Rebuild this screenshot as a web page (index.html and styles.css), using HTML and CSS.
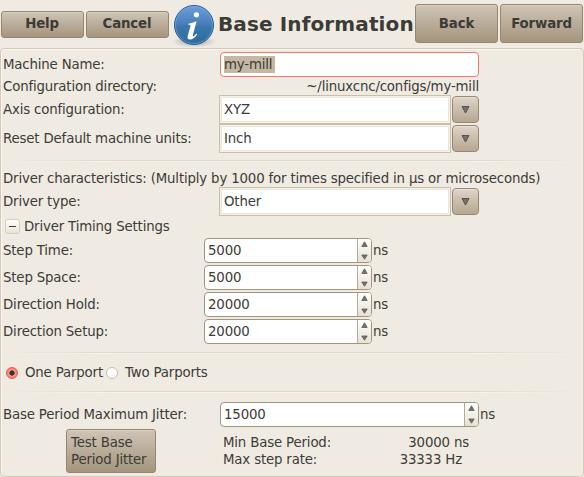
FILE: index.html
```html
<!DOCTYPE html>
<html lang="en">
<head>
<meta charset="utf-8">
<title>Base Information</title>
<link rel="stylesheet" href="styles.css">
</head>
<body>
<header class="toolbar">
  <button class="btn small">Help</button>
  <button class="btn small">Cancel</button>
  <svg class="info" width="44" height="44" viewBox="0 0 44 44">
    <defs>
      <linearGradient id="ball" x1="0" y1="0" x2="0" y2="1"><stop offset="0" stop-color="#6f9edb"/><stop offset=".48" stop-color="#477fb9"/><stop offset=".55" stop-color="#3a77ad"/><stop offset="1" stop-color="#2c6c99"/></linearGradient>
      <radialGradient id="shade"><stop offset="0" stop-color="#777" stop-opacity=".65"/><stop offset="1" stop-color="#777" stop-opacity="0"/></radialGradient>
    </defs>
    <ellipse cx="22" cy="37.5" rx="22" ry="6" fill="url(#shade)"/>
    <circle cx="22" cy="21" r="19.5" fill="url(#ball)" stroke="#245c96"/>
    <circle cx="22" cy="21" r="18.5" fill="none" stroke="#8ab4e4" stroke-opacity=".5"/>
    <circle cx="24.4" cy="10.8" r="2.6" fill="#fff"/>
    <path d="M16.5 19.7C19.3 19.2 21.7 18.5 24.6 17.3L20.9 30.7C20.5 32.5 21.2 32.7 22.2 31.8C23 31.1 23.6 30.3 24.3 29.4L25.2 30.2C22.8 33.9 20.4 35.5 17.9 35.5C15.7 35.5 15.1 34.2 15.8 31.6L18.4 22.6C18.8 21.1 18.2 20.7 16.3 20.7Z" fill="#fff"/>
  </svg>
  <h1>Base Information</h1>
  <button class="btn large">Back</button>
  <button class="btn large">Forward</button>
</header>
<main class="panel">
  <div class="row name"><label>Machine Name:</label><div class="entry"><span class="selected">my-mill</span></div></div>
  <div class="row dir"><label>Configuration directory:</label><span class="path">~/linuxcnc/configs/my-mill</span></div>
  <div class="row combo"><label>Axis configuration:</label><div class="value">XYZ</div><button class="drop"><svg width="9" height="9"><use href="#down"/></svg></button></div>
  <div class="row combo"><label>Reset Default machine units:</label><div class="value">Inch</div><button class="drop"><svg width="9" height="9"><use href="#down"/></svg></button></div>
  <hr class="first">
  <div class="row heading">Driver characteristics: (Multiply by 1000 for times specified in µs or microseconds)</div>
  <div class="row combo"><label>Driver type:</label><div class="value">Other</div><button class="drop"><svg width="9" height="9"><use href="#down"/></svg></button></div>
  <div class="row expander"><span class="toggle"></span><span>Driver Timing Settings</span></div>
  <div class="row timing"><label>Step Time:</label><div class="spin"><span>5000</span><i><svg width="7" height="19"><use href="#arrows"/></svg></i></div><span class="unit">ns</span></div>
  <div class="row timing"><label>Step Space:</label><div class="spin"><span>5000</span><i><svg width="7" height="19"><use href="#arrows"/></svg></i></div><span class="unit">ns</span></div>
  <div class="row timing"><label>Direction Hold:</label><div class="spin"><span>20000</span><i><svg width="7" height="19"><use href="#arrows"/></svg></i></div><span class="unit">ns</span></div>
  <div class="row timing"><label>Direction Setup:</label><div class="spin"><span>20000</span><i><svg width="7" height="19"><use href="#arrows"/></svg></i></div><span class="unit">ns</span></div>
  <hr>
  <div class="row radios"><span class="radio checked"></span><span class="one">One Parport</span><span class="radio"></span><span>Two Parports</span></div>
  <hr>
  <div class="row jitter"><label>Base Period Maximum Jitter:</label><div class="spin wide"><span>15000</span><i><svg width="7" height="19"><use href="#arrows"/></svg></i></div><span class="unit">ns</span></div>
  <div class="results">
    <button class="btn test">Test Base<br>Period Jitter</button>
    <div class="names">Min Base Period:<br>Max step rate:</div>
    <div class="numbers"><span>30000 ns</span><span class="rate">33333 Hz</span></div>
  </div>
</main>
<svg class="symbols" width="0" height="0">
  <symbol id="down" viewBox="0 0 9 9"><path d="M1 1.5H8L4.5 8Z" fill="#77736b" stroke="#55524d"/></symbol>
  <symbol id="arrows" viewBox="0 0 7 19"><path d="M.8 5.5H6.2L3.5.8ZM.8 14H6.2L3.5 18.2Z" fill="#77736b" stroke="#5b5852" stroke-width=".8"/></symbol>
</svg>
</body>
</html>
```
FILE: styles.css
```css
* { box-sizing: border-box; }
body {
  margin: 0;
  width: 584px;
  height: 477px;
  overflow: hidden;
  background: #efebe3;
  color: #3c3b37;
  font: 13.33px/17px "DejaVu Sans", sans-serif;
  letter-spacing: -0.165px;
  white-space: nowrap;
}
button { font: inherit; color: inherit; letter-spacing: inherit; padding: 0; }
.toolbar { display: flex; align-items: center; height: 48px; padding: 0 1px; }
.btn {
  border: 1px solid #95876f;
  border-radius: 3px;
  background: linear-gradient(#d0c5b6, #b9ac99 50%, #a5957e);
  box-shadow: inset 0 1px #d9cfc3;
}
.toolbar .btn { font-weight: bold; flex: none; padding-bottom: 1px; }
.toolbar .small { padding-right: 1px; }
.small { width: 83px; height: 27px; margin-right: 2px; }
.large { width: 83px; height: 39px; margin: 0 2px 1px 0; }
.large:last-child { margin-right: 0; }
.info { flex: none; margin: 3px 0 0 1px; }
h1 {
  flex: none;
  width: 199px;
  margin: 0;
  padding-left: 2px;
  font-size: 20px;
  line-height: 24px;
  letter-spacing: 0.12px;
}
.panel {
  height: 429px;
  border: 1px solid #d6cab5;
  border-radius: 4px;
  box-shadow: inset 1px 1px #f9f7f1;
  padding: 2px 2px 0;
}
.row { display: flex; align-items: center; }
.row label { width: 216px; flex: none; }
.name { height: 27px; }
.name label { width: 217px; }
.entry {
  width: 259px;
  height: 25px;
  padding: 3px;
  border: 1px solid #f67865;
  border-radius: 4px;
  background: #fff;
}
.selected { display: inline-block; width: 51px; height: 17px; background: #c5b8a3; }
.dir { height: 17px; }
.path { width: 260px; display: flex; justify-content: flex-end; }
.combo { height: 29px; }
.value {
  width: 232px;
  height: 29px;
  padding: 5px 4px;
  border: 1px solid #cbbfa8;
  background: #fff;
  box-shadow: inset 0 0 0 1px #f5f1e9, inset 0 0 0 2px #ebe5da;
}
.drop {
  display: grid;
  place-items: center;
  width: 27px;
  height: 27px;
  margin-left: 1px;
  border: 1px solid #958973;
  border-radius: 4px;
  background: linear-gradient(#ded6ca, #c9bdab 50%, #b6a792);
  box-shadow: inset 0 1px #e8e1d7;
}
hr {
  height: 2px;
  margin: 7px 0 0;
  border: 0;
  background: linear-gradient(#e0d9ca 50%, #f7f4ed 50%);
  mask-image: linear-gradient(90deg, transparent, #000 20%, #000 80%, transparent);
}
.heading { height: 18px; margin-top: 7px; }
.expander { height: 21px; }
.toggle {
  display: grid;
  place-items: center;
  width: 15px;
  height: 15px;
  margin: 0 4px 0 2px;
  border: 1px solid #d6cdbc;
  border-radius: 3px;
  background: linear-gradient(#fff, #e9e2d5);
}
.toggle::before { content: ""; width: 7px; height: 1px; background: #3c3b37; }
.timing { height: 27px; }
.timing label { width: 201px; }
.spin {
  display: flex;
  width: 168px;
  height: 25px;
  border: 1px solid #a3957c;
  border-radius: 4px;
  background: #fff;
  overflow: hidden;
}
.spin span { flex: 1; padding: 3px; }
.spin i {
  display: grid;
  place-items: center;
  width: 14px;
  border-left: 1px solid #b8ab95;
  background: linear-gradient(#fff, #e7e0d4);
}
.wide { width: 259px; }
.unit { margin-left: 1px; }
.radios { height: 37px; }
.radios + hr { margin-top: 0; }
.radio {
  width: 12px;
  height: 12px;
  margin: 0 7px 0 4px;
  border: 1px solid #c9bdaa;
  border-radius: 50%;
  background: #fff;
}
.one { width: 77px; }
.checked {
  margin: 0 7px 0 3px;
  border-color: #e8604c;
  background: radial-gradient(circle, #3c3430 2.3px, #f9a093 3px, #f4664f 6px);
}
.jitter { height: 27px; margin-top: 8px; }
.jitter label { width: 217px; }
.results { display: flex; height: 46px; padding-left: 63px; }
.test { width: 90px; height: 44px; margin-top: 1px; padding-left: 4px; text-align: left; }
.names, .numbers { padding-top: 6px; }
.names { width: 110px; margin-left: 67px; }
.numbers { display: flex; flex-direction: column; width: 136px; text-align: right; }
.rate { padding-right: 7px; }
.symbols { display: none; }
```
